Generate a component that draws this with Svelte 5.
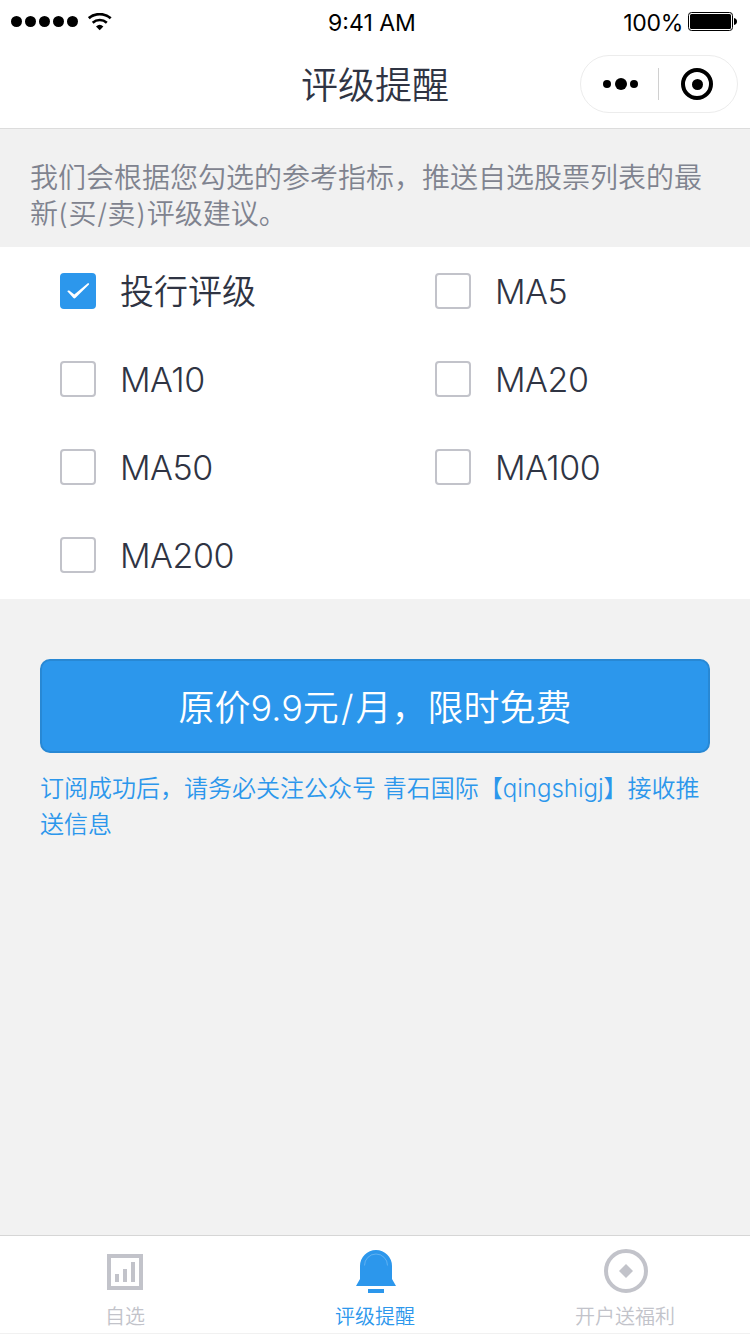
<script>
	let options = [
		{ label: '投行评级', checked: true },
		{ label: 'MA5', checked: false },
		{ label: 'MA10', checked: false },
		{ label: 'MA20', checked: false },
		{ label: 'MA50', checked: false },
		{ label: 'MA100', checked: false },
		{ label: 'MA200', checked: false }
	];

	const tabs = [
		{ id: 'stocks', label: '自选' },
		{ id: 'alerts', label: '评级提醒' },
		{ id: 'account', label: '开户送福利' }
	];

	let active = 'alerts';
</script>

<div class="page">
	<header>
		<div class="status">
			<div class="signal">
				<svg width="68" height="12" viewBox="0 0 68 12">
					{#each [0, 1, 2, 3, 4] as i}
						<circle cx={5.5 + i * 14} cy="5.5" r="5.5" />
					{/each}
				</svg>
				<svg width="24" height="18" viewBox="0 0 24 18">
					<path d="M.8 5.2A17 17 0 0 1 22.7 5.2" fill="none" stroke="#000" stroke-width="2.8" />
					<path d="M4.7 9.7A10.5 10.5 0 0 1 18.8 9.7" fill="none" stroke="#000" stroke-width="2.6" />
					<path d="M8 13.5Q11.7 10.2 15.4 13.5L11.7 17.2z" />
				</svg>
			</div>
			<div class="time">9:41 AM</div>
			<div class="power">
				<span>100%</span>
				<svg width="49" height="19" viewBox="0 0 49 19">
					<rect x=".5" y=".5" width="44" height="18" rx="3" fill="none" stroke="#000" />
					<rect x="2" y="2" width="41" height="15" rx="1.5" />
					<path d="M46 6c2 .3 3 1.6 3 3.5s-1 3.2-3 3.5z" />
				</svg>
			</div>
		</div>
		<div class="nav">
			<h1>评级提醒</h1>
			<div class="capsule">
				<svg width="36" height="12" viewBox="0 0 36 12">
					<circle cx="5" cy="6" r="4" />
					<circle cx="19" cy="6" r="6" />
					<circle cx="32" cy="6" r="4" />
				</svg>
				<i></i>
				<svg width="32" height="32" viewBox="0 0 32 32">
					<circle cx="16" cy="16" r="14" fill="none" stroke="#000" stroke-width="4" />
					<circle cx="16.5" cy="16.5" r="5.5" />
				</svg>
			</div>
		</div>
	</header>

	<p class="intro">我们会根据您勾选的参考指标，推送自选股票列表的最新<span class="pair">(买/卖)</span>评级建议。</p>

	<div class="options">
		{#each options as option}
			<label>
				<input type="checkbox" bind:checked={option.checked} />
				<span class="box" class:checked={option.checked}>
					{#if option.checked}
						<svg width="24" height="18" viewBox="0 0 24 18">
							<path d="M1.3 9.2Q1.8 8 3.2 8.6L8.3 12.4L21.8 1.3Q23.6 .8 23 2.4L9.6 15.8Q8.3 17 7.2 15.8Z" fill="#fff" />
						</svg>
					{/if}
				</span>
				<span class="label">{option.label}</span>
			</label>
		{/each}
	</div>

	<main>
		<button class="buy">原价9.9元<span class="slash">/</span>月，限时免费</button>
		<p class="hint">订阅成功后，请务必关注公众号 青石国际【qingshigj】接收推送信息</p>
	</main>

	<nav class="tabs">
		{#each tabs as tab}
			<button class="tab" class:active={active === tab.id} on:click={() => (active = tab.id)}>
				<svg width="48" height="48" viewBox="0 0 48 48" fill="currentColor">
					{#if tab.id === 'stocks'}
						<rect x="8" y="11" width="32" height="32" fill="none" stroke="currentColor" stroke-width="4" />
						<path d="M14 29h4v8h-4zM22 24h4v13h-4zM30 17h4v20h-4z" />
					{:else if tab.id === 'alerts'}
						<path d="M9 21a16 16 0 0 1 32 0v13l4 7H5l4-7z" />
						<path d="M13.5 20.5a11.5 11.5 0 0 1 23 0" fill="none" stroke="#fff" stroke-opacity=".35" stroke-width=".7" />
						<path d="M17 44h16v4H17z" />
					{:else}
						<circle cx="25" cy="26" r="20" fill="none" stroke="currentColor" stroke-width="4" />
						<path d="M25 19l7 7-7 7-7-7z" />
					{/if}
				</svg>
				<span>{tab.label}</span>
			</button>
		{/each}
	</nav>
</div>

<style>
	:global(body) {
		margin: 0;
	}
	.page {
		display: flex;
		flex-direction: column;
		width: 750px;
		height: 1334px;
		background: #f1f1f1;
		color: #2f3443;
		font-family: Inter, "Noto Sans CJK SC", sans-serif;
		font-weight: 350;
		overflow: hidden;
	}
	svg {
		display: block;
		flex: none;
	}
	p, h1 {
		margin: 0;
		font-weight: 350;
	}
	header {
		height: 128px;
		background: #fff;
		border-bottom: 1px solid #dcdcdc;
	}
	.status {
		display: grid;
		grid-template-columns: 1fr auto 1fr;
		align-items: start;
		height: 40px;
		padding: 2px 13px 0 11px;
		box-sizing: border-box;
		color: #000;
		font-size: 23px;
		font-weight: 400;
	}
	.signal, .power {
		display: flex;
		align-items: center;
		height: 39px;
	}
	.signal {
		gap: 9px;
	}
	.time, .power span {
		line-height: 39px;
		padding-top: 2px;
		box-sizing: border-box;
	}
	.time {
		padding-right: 4px;
	}
	.power {
		justify-content: flex-end;
		gap: 5px;
	}
	.power span {
		padding-top: 3px;
		letter-spacing: -.3px;
	}
	.nav {
		display: grid;
		grid-template-columns: 1fr auto 1fr;
		align-items: center;
		height: 88px;
		padding: 0 12px;
	}
	h1 {
		grid-column: 2;
		padding-top: 3px;
		font-size: 37px;
		line-height: 85px;
	}
	.capsule {
		display: flex;
		align-items: center;
		justify-self: end;
		box-sizing: border-box;
		width: 158px;
		height: 58px;
		padding: 0 24px 0 21px;
		border: 1px solid #ececec;
		border-radius: 29px;
	}
	.capsule i {
		width: 1px;
		height: 32px;
		margin: 0 22px 0 20px;
		background: #d0d0d0;
	}
	.intro {
		height: 118px;
		padding: 31px 45px 0 30px;
		box-sizing: border-box;
		color: #7f838f;
		font-size: 28px;
		line-height: 36px;
	}
	.pair {
		letter-spacing: .7px;
	}
	.options {
		display: grid;
		grid-template-columns: 1fr 1fr;
		grid-auto-rows: 88px;
		background: #fff;
	}
	label {
		display: flex;
		align-items: center;
		gap: 24px;
		padding-left: 60px;
		font-size: 34px;
	}
	.label {
		padding-top: 1px;
		line-height: 40px;
		letter-spacing: -.5px;
	}
	label:first-child .label {
		line-height: 42px;
		letter-spacing: 0;
	}
	input {
		display: none;
	}
	.box {
		display: flex;
		align-items: center;
		justify-content: center;
		width: 36px;
		height: 36px;
		box-sizing: border-box;
		border: 2px solid #c2c3ca;
		border-radius: 4px;
	}
	.box.checked {
		border-color: #2c97ec;
		background: #2c97ec;
	}
	main {
		flex: 1;
		padding: 60px 40px 0;
		background: #f2f2f2;
	}
	button {
		font: inherit;
		cursor: pointer;
	}
	.buy {
		display: block;
		width: 670px;
		height: 94px;
		padding: 0 0 3px;
		border: 2px solid #2888d4;
		border-radius: 10px;
		background: #2c97ec;
		color: #fff;
		font-size: 36px;
	}
	.slash {
		padding: 0 2px;
	}
	.hint {
		padding-top: 18px;
		color: #2c97ec;
		font-size: 24px;
		line-height: 36px;
	}
	.tabs {
		display: grid;
		grid-template-columns: repeat(3, 1fr);
		height: 97px;
		background: #fff;
		border-top: 1px solid #d6d6d6;
		border-bottom: 1px solid #f1f1f1;
	}
	.tab {
		display: flex;
		flex-direction: column;
		align-items: center;
		padding: 9px 0 0;
		border: 0;
		background: none;
		color: #c2c3ca;
		font-size: 20px;
		line-height: 24px;
	}
	.tab span {
		margin-top: 12px;
	}
	.tab.active {
		color: #2c97ec;
	}
</style>
